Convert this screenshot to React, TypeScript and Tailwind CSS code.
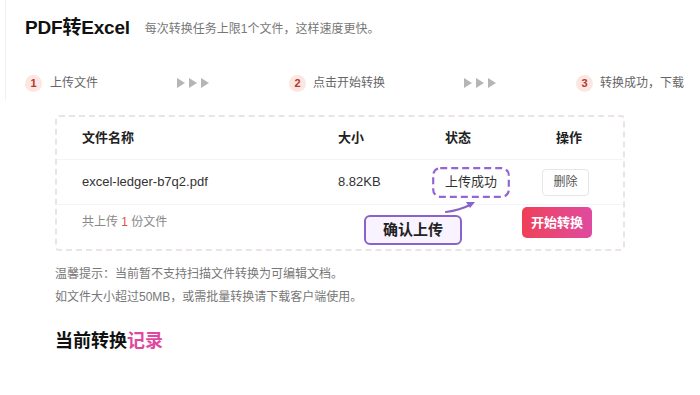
import React from "react";

const font = { fontFamily: '"Liberation Sans", "Noto Sans CJK SC", sans-serif' };

function Badge({ n }: { n: number }) {
  return (
    <span className="flex h-[17px] w-[17px] items-center justify-center rounded-full bg-[#fbe6e2] text-[11px] font-bold text-[#b4372b]">
      {n}
    </span>
  );
}

function Arrows() {
  return (
    <svg width="32" height="10" viewBox="0 0 32 10" className="block">
      <polygon points="0,0 8,5 0,10" fill="#b5b5b5" />
      <polygon points="12,0 20,5 12,10" fill="#b5b5b5" />
      <polygon points="24,0 32,5 24,10" fill="#b5b5b5" />
    </svg>
  );
}

export default function App() {
  return (
    <div className="relative h-[395px] w-[700px] overflow-hidden bg-white text-[#222]" style={font}>
      {/* header panel */}
      <div className="ml-[5px] h-[100px] border-l border-[#f0f0f0] pl-[19px]">
        <div className="flex h-[56px] items-center pt-[1px]">
          <h1 className="text-[19px] font-bold tracking-[-0.2px] text-[#111]">PDF转Excel</h1>
          <span className="ml-[15px] text-[12px] text-[#777]">每次转换任务上限1个文件，这样速度更快。</span>
        </div>
        <div className="mt-[10px] flex h-[34px] items-center whitespace-nowrap text-[12px] text-[#666]">
          <div className="flex w-[152px] items-center">
            <Badge n={1} />
            <span className="ml-[8px]">上传文件</span>
          </div>
          <div className="w-[112px]">
            <Arrows />
          </div>
          <div className="flex w-[175px] items-center">
            <Badge n={2} />
            <span className="ml-[7px]">点击开始转换</span>
          </div>
          <div className="w-[112px]">
            <Arrows />
          </div>
          <div className="flex items-center">
            <Badge n={3} />
            <span className="ml-[7px]">转换成功，下载</span>
          </div>
        </div>
      </div>

      {/* main */}
      <div className="pl-[55px] pt-[15px]">
        <div className="relative w-[570px] rounded-[4px] border-2 border-dashed border-[#ece4e4]">
          <div className="grid h-[43px] grid-cols-[256px_96px_82px_104px] items-center border-b border-[#f4f4f4] pl-[25px] text-[13px] font-bold text-[#222]">
            <span>文件名称</span>
            <span>大小</span>
            <span className="pl-[11px]">状态</span>
            <span className="pl-[40px]">操作</span>
          </div>
          <div className="grid h-[45px] grid-cols-[256px_96px_82px_104px] items-center border-b border-[#f4f4f4] pl-[25px] text-[13px] text-[#333]">
            <span>excel-ledger-b7q2.pdf</span>
            <span>8.82KB</span>
            <span className="relative -ml-[2px] flex h-[31px] w-[78px] items-center justify-center">
              <svg className="absolute inset-0" width="78" height="31" viewBox="0 0 78 31">
                <rect x="1.2" y="1.2" width="75.6" height="28.6" rx="7" fill="none" stroke="#9565d4" strokeWidth="2.2" strokeDasharray="7 4" />
              </svg>
              <span className="relative">上传成功</span>
            </span>
            <span className="pl-[26px]">
              <span className="inline-flex h-[27px] w-[47px] items-center justify-center rounded-[4px] border border-[#e6e6e6] bg-white text-[12px] text-[#555]">
                删除
              </span>
            </span>
          </div>
          <div className="grid h-[44px] grid-cols-[256px_96px_82px_104px] pl-[25px]">
            <span className="pt-[8px] text-[12px] text-[#888]">
              共上传 <span className="text-[#d9534f]">1</span> 份文件
            </span>
            <span />
            <span />
            <span className="pl-[6px] pt-[2px]">
              <span className="inline-flex h-[31px] w-[70px] items-center justify-center rounded-[5px] bg-gradient-to-r from-[#ef3f56] to-[#e04aa0] text-[13px] font-bold text-white">
                开始转换
              </span>
            </span>
          </div>

          {/* annotation */}
          <div className="absolute left-[307px] top-[98px] flex h-[30px] w-[98px] items-center justify-center rounded-[6px] border-2 border-[#8a62c9] bg-[#f8f3ff] text-[15px] font-bold text-[#222]">
            确认上传
          </div>
          <svg className="absolute left-[385px] top-[80px]" width="36" height="20" viewBox="0 0 36 20">
            <path d="M4 15 Q18 13 28 8" fill="none" stroke="#8a62c9" strokeWidth="2" strokeLinecap="round" />
            <polygon points="33,5 24,5 28,11" fill="#8a62c9" />
          </svg>
        </div>

        <div className="mt-[12px] text-[12px] leading-[23px] text-[#777]">
          <p>温馨提示：当前暂不支持扫描文件转换为可编辑文档。</p>
          <p>如文件大小超过50MB，或需批量转换请下载客户端使用。</p>
        </div>

        <h2 className="mt-[19px] text-[18px] font-bold text-[#111]">
          当前转换<span className="text-[#e0479e]">记录</span>
        </h2>
      </div>
    </div>
  );
}
